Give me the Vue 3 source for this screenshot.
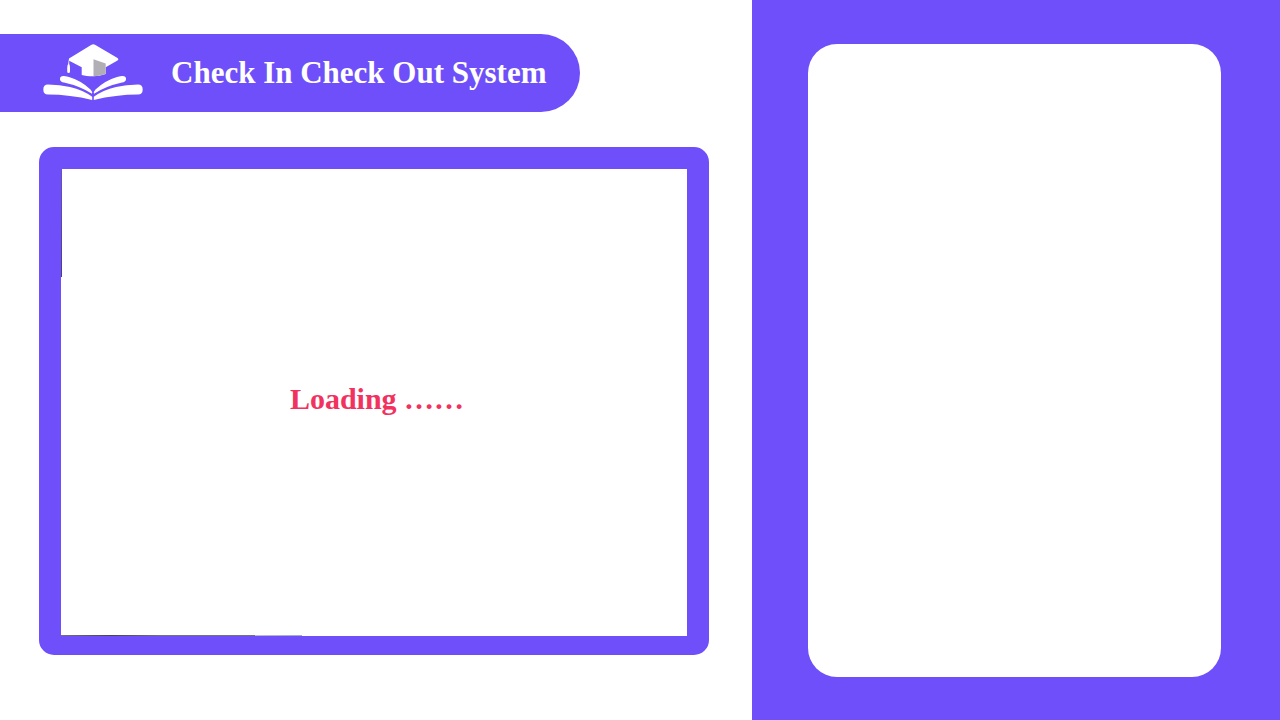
<script setup>
const title = 'Check In Check Out System'
const status = 'Loading ……'
</script>

<template>
  <div class="page">
    <main class="scanner">
      <header class="banner">
        <svg class="logo" viewBox="0 0 100 58" aria-hidden="true">
          <path class="light" d="M26 14.500 L48.500 .8 Q50.300 -.2 52 .8 L74.500 14 Q76.200 15.300 74.500 16.500 L62.700 23.300 V30 Q56 32.300 50.500 32.300 Q43 32.300 38.700 31 V23.300 L26.200 16.800 V20 Q27 21 27 24 V27.500 Q27 29 25.600 29 Q24.200 29 24.200 27.500 V24 Q24.200 21 25.200 20 Z" />
          <path class="shade" d="M50.500 15.300 L62.700 19.500 V30 Q56 32.300 50.500 32.300 Z" />
          <path class="light" d="M20.500 32 Q16.500 32 17 35.500 Q17.500 38 21 38.500 Q37 42 49 49.800 Q49.800 47.800 47.500 45.500 Q38 36.500 26 33 Q22.500 32 20.500 32 Z" />
          <path class="light" d="M79.500 32 Q83.500 32 83 35.500 Q82.500 38 79 38.500 Q63 42 51 49.800 Q50.200 47.800 52.500 45.500 Q62 36.500 74 33 Q77.500 32 79.500 32 Z" />
          <path class="light" d="M5 40.500 Q.3 40.500 .3 45.500 Q.3 50.500 5 50.500 Q27 50.500 49.200 56 V52.800 Q40 46 27 43 Q17 40.500 5 40.500 Z" />
          <path class="light" d="M95 40.500 Q99.700 40.500 99.700 45.500 Q99.700 50.500 95 50.500 Q73 50.500 50.800 56 V52.800 Q60 46 73 43 Q83 40.500 95 40.500 Z" />
        </svg>
        <h1>{{ title }}</h1>
      </header>
      <section class="camera">
        <p role="status">{{ status }}</p>
      </section>
    </main>
    <aside class="side">
      <section class="details" aria-label="Details"></section>
    </aside>
  </div>
</template>

<style>
body {
  margin: 0;
}
</style>

<style scoped>
.page {
  display: grid;
  grid-template-columns: 752fr 528fr;
  min-height: 100vh;
  background: #fff;
  font-family: "Liberation Serif", "Times New Roman", serif;
}
.scanner {
  display: flex;
  flex-direction: column;
  padding: 34px 43px 65px 0;
}
.banner {
  display: flex;
  align-items: center;
  align-self: flex-start;
  box-sizing: border-box;
  min-height: 78px;
  padding: 0 34px 0 43px;
  gap: 28px;
  border-radius: 0 39px 39px 0;
  background: #6f4ff9;
}
.logo {
  width: 100px;
  height: 58px;
}
.light {
  fill: #fff;
}
.shade {
  fill: #b2aeb6;
}
h1 {
  margin: 0;
  color: #fff;
  font-size: 31px;
  line-height: 36px;
}
.camera {
  position: relative;
  display: flex;
  flex: 1;
  align-items: center;
  justify-content: center;
  margin: 35px 0 0 39px;
  padding: 0 0 8px 6px;
  border: solid #6f4ff9;
  border-width: 22px 22px 19px;
  border-radius: 15px;
  background: #fff;
  background-clip: padding-box;
}
.camera::before,
.camera::after {
  content: "";
  position: absolute;
  left: 0;
}
.camera::before {
  top: 0;
  width: 1px;
  height: 108px;
  background: linear-gradient(#6854bd, #4b407c);
}
.camera::after {
  bottom: 0;
  width: 241px;
  height: 1px;
  background: linear-gradient(90deg, #77717d 0, #47454f 50px, #77717d 100px, #77717d 194px, #b9bdd4 194px, #a4abc5 241px);
}
p {
  margin: 0;
  color: #f2325e;
  font-size: 30px;
  font-weight: 700;
  line-height: 36px;
}
.side {
  display: flex;
  padding: 44px 59px 43px 56px;
  background: #6f4ff9;
}
.details {
  flex: 1;
  border-radius: 29px;
  background: #fff;
}
</style>
